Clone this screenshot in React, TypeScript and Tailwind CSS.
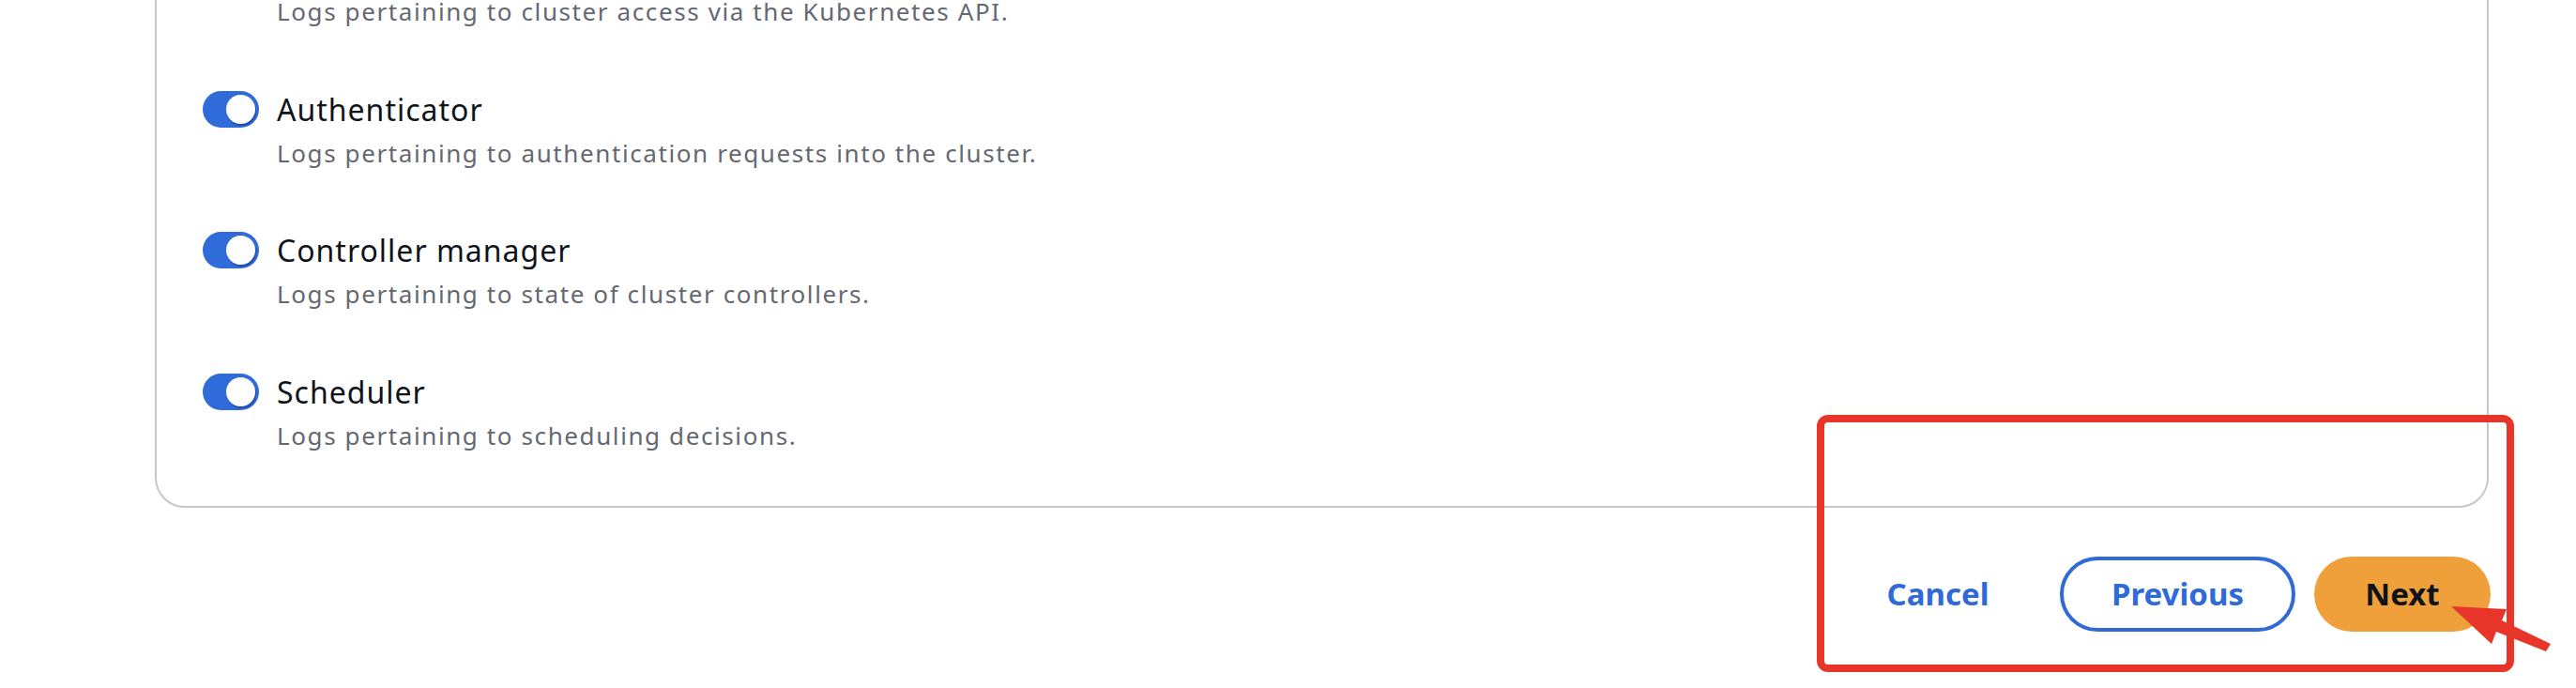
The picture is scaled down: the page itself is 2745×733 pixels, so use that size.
import React from 'react';

interface LogType {
  id: string;
  name: string;
  description: string;
}

const logTypes: LogType[] = [
  { id: 'audit', name: 'Audit', description: 'Logs pertaining to cluster access via the Kubernetes API.' },
  { id: 'authenticator', name: 'Authenticator', description: 'Logs pertaining to authentication requests into the cluster.' },
  { id: 'controllerManager', name: 'Controller manager', description: 'Logs pertaining to state of cluster controllers.' },
  { id: 'scheduler', name: 'Scheduler', description: 'Logs pertaining to scheduling decisions.' },
];

function Toggle() {
  return (
    <span className="mt-1 flex h-[39px] w-[60px] shrink-0 items-center justify-end rounded-full bg-[#2f6bd9] pr-[4px]">
      <span className="h-[31px] w-[31px] rounded-full bg-white shadow-[1px_2px_1px_rgba(0,20,80,0.35)]" />
    </span>
  );
}

export default function App() {
  return (
    <div className="relative h-[733px] w-[2745px] overflow-hidden bg-white font-['Noto_Sans',sans-serif]">
      {/* Logging panel, scrolled so only its lower part shows */}
      <div className="ml-[165px] w-[2487px]">
        <div className="-mt-[100px] flex flex-col gap-[60.5px] rounded-[32px] border-2 border-[#c6c6cd] pb-[55px] pl-[49px] pt-[40px]">
          {logTypes.map((log) => (
            <div key={log.id} className="flex items-start gap-[19px]">
              <Toggle />
              <div className="flex flex-col">
                <span className="text-[32px] leading-[48px] tracking-[1px] text-[#0f141a]">{log.name}</span>
                <span className="mt-0.5 text-[26px] leading-[40px] tracking-[1.6px] text-[#656871]">{log.description}</span>
              </div>
            </div>
          ))}
        </div>

        {/* Wizard actions */}
        <div className="-mr-[2px] mt-[52px] flex justify-end gap-[20px]">
          <button className="flex h-[80px] w-[220px] items-center justify-center rounded-full text-[33px] font-bold text-[#2f6ad8]">
            Cancel
          </button>
          <button className="flex h-[80px] w-[251px] items-center justify-center rounded-full border-4 border-[#2f6ad8] text-[33px] font-bold text-[#2f6ad8]">
            Previous
          </button>
          <button className="flex h-[80px] w-[188px] items-center justify-center rounded-full bg-[#f0a03a] text-[33px] font-bold text-[#0f141a]">
            Next
          </button>
        </div>
      </div>

      {/* Annotation: highlight box and arrow */}
      <div className="pointer-events-none absolute left-[1936px] top-[442px] h-[274px] w-[743px] rounded-[12px] border-8 border-[#e8352a]" />
      <svg className="pointer-events-none absolute left-0 top-0" width="2745" height="733">
        <polygon
          points="2612,646 2671,649 2666,661 2718,686 2713,694 2660,673 2655,686"
          fill="#e8352a"
        />
      </svg>
    </div>
  );
}
